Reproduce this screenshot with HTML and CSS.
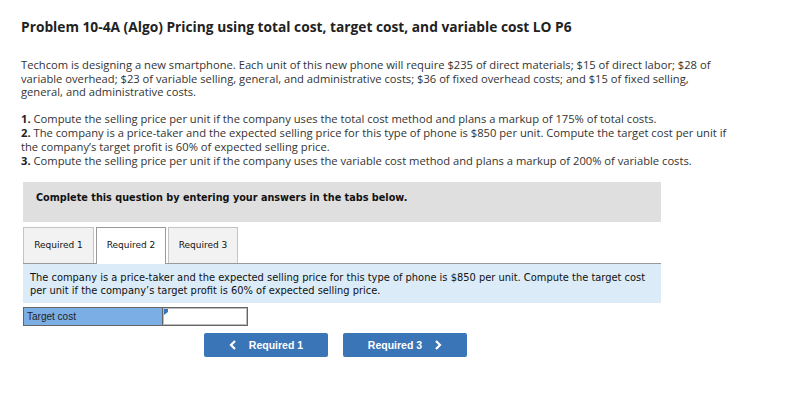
FILE: index.html
```html
<!DOCTYPE html>
<html>
<head>
<meta charset="utf-8">
<link rel="stylesheet" href="styles.css">
</head>
<body>
<div class="page">
  <h1 class="title">Problem 10-4A (Algo) Pricing using total cost, target cost, and variable cost LO P6</h1>
  <p class="intro">Techcom is designing a new smartphone. Each unit of this new phone will require $235 of direct materials; $15 of direct labor; $28 of variable overhead; $23 of variable selling, general, and administrative costs; $36 of fixed overhead costs; and $15 of fixed selling, general, and administrative costs.</p>
  <div class="reqs">
    <div><b>1.</b> Compute the selling price per unit if the company uses the total cost method and plans a markup of 175% of total costs.</div>
    <div><b>2.</b> The company is a price-taker and the expected selling price for this type of phone is $850 per unit. Compute the target cost per unit if the company’s target profit is 60% of expected selling price.</div>
    <div><b>3.</b> Compute the selling price per unit if the company uses the variable cost method and plans a markup of 200% of variable costs.</div>
  </div>
  <div class="question">
    <div class="banner">Complete this question by entering your answers in the tabs below.</div>
    <div class="tabs">
      <div class="tab">Required 1</div>
      <div class="tab active">Required 2</div>
      <div class="tab">Required 3</div>
    </div>
    <div class="panel">The company is a price-taker and the expected selling price for this type of phone is $850 per unit. Compute the target cost per unit if the company’s target profit is 60% of expected selling price.</div>
    <div class="answer">
      <div class="label">Target cost</div>
      <div class="input"><span class="flag"></span></div>
    </div>
    <div class="nav">
      <button class="btn"><svg width="8" height="10" viewBox="0 0 8 10"><path d="M6 1 L2 5 L6 9" fill="none" stroke="#fff" stroke-width="2.2"/></svg><span>Required 1</span></button>
      <button class="btn"><span>Required 3</span><svg width="8" height="10" viewBox="0 0 8 10"><path d="M2 1 L6 5 L2 9" fill="none" stroke="#fff" stroke-width="2.2"/></svg></button>
    </div>
  </div>
</div>
</body>
</html>
```

FILE: styles.css
```css
* { box-sizing: border-box; }
body { margin: 0; background: #fff; }
.page { padding: 18px 0 0 21px; width: 760px; font-family: "Open Sans", Lato, sans-serif; color: #333; }
.title { margin: 0; font-size: 13.75px; font-weight: 700; color: #222; line-height: 17px; }
.intro { margin: 23px 0 0; font-size: 11.2px; line-height: 13.5px; width: 706px; }
.reqs { margin-top: 13px; font-size: 11.2px; line-height: 14px; width: 706px; }
.reqs b { font-weight: 700; color: #222; }
.question { margin-top: 14px; margin-left: 2px; width: 638px; font-family: "DejaVu Sans", Verdana, sans-serif; }
.banner { background: #dfdfdf; height: 40px; padding: 10px 0 0 13px; font-size: 9.7px; font-weight: 700; color: #111; }
.tabs { display: flex; gap: 2px; margin-top: 5px; height: 36px; }
.tab { width: 71px; height: 36px; border: 1px solid #c4c4c4; border-bottom: none; background: #f2f2f2; font-size: 9px; color: #111; text-align: center; padding-top: 12px; }
.tab.active { width: 70px; background: #fff; border-color: #999; height: 37px; position: relative; z-index: 1; }
.tab:nth-child(3) { width: 70px; }
.panel { border-top: 1px solid #999; background: #dbebf8; height: 40px; padding: 7px 0 0 7px; font-size: 9.9px; line-height: 13.5px; color: #111; }
.answer { display: flex; margin-top: 4px; height: 19px; }
.label { width: 139px; background: #7aaee5; border: 1px solid #666; border-right: none; font-family: "Liberation Sans", Arial, sans-serif; font-size: 10px; color: #222; padding: 3px 0 0 3px; }
.input { width: 86px; border: 1px solid #666; background: #fff; position: relative; box-shadow: inset 0 0 0 1px #bbb; }
.flag { position: absolute; left: 1px; top: 1px; width: 0; height: 0; border-top: 3px solid #3a77b8; border-bottom: 3px solid transparent; border-left: 4px solid #3a77b8; }
.nav { display: flex; gap: 15px; margin: 7px 0 0 181px; }
.btn { width: 124px; height: 24px; background: #3a75b7; border: none; border-radius: 2px; color: #fff; font-family: "Liberation Sans", Arial, sans-serif; font-weight: 700; font-size: 10.5px; display: flex; align-items: center; justify-content: center; gap: 12px; padding: 0; }
.btn svg { display: block; }
```
